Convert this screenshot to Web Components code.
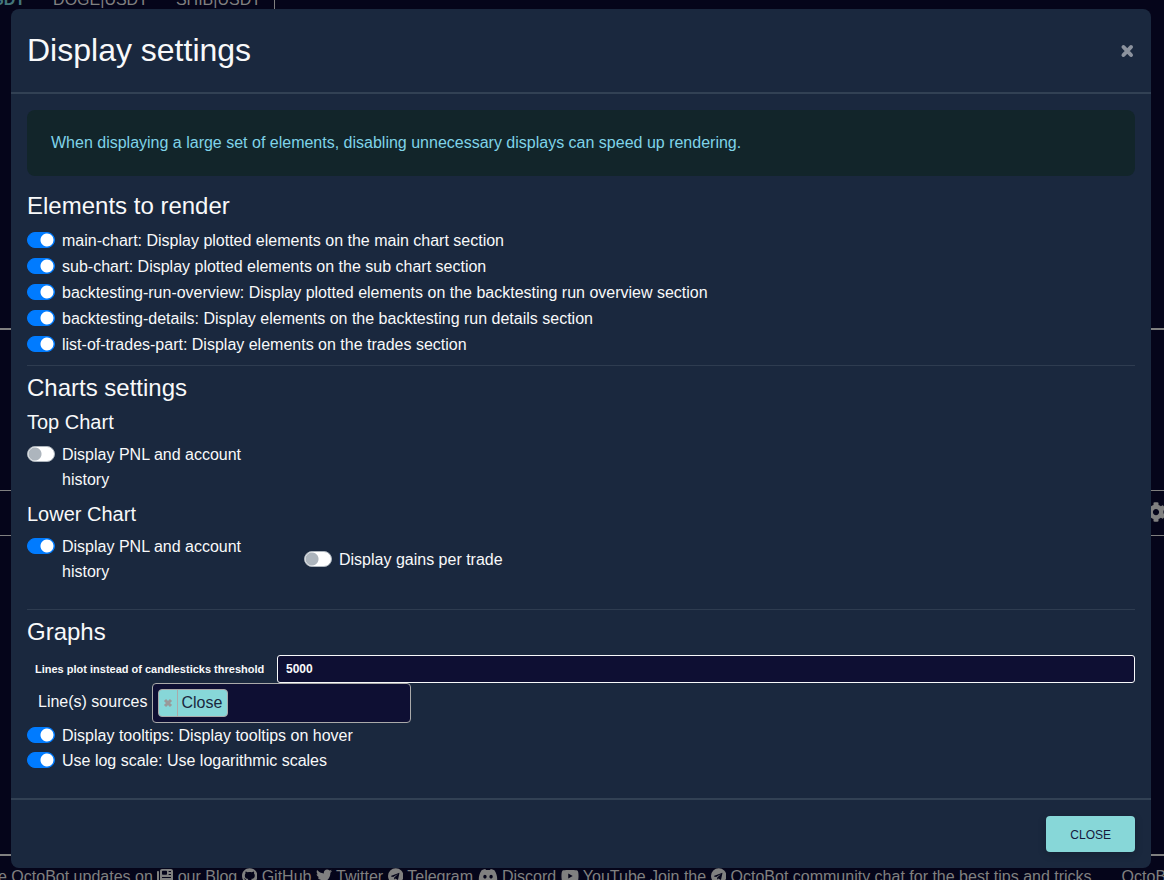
<!DOCTYPE html>
<html lang="en">
<head>
<meta charset="utf-8">
<title>Display settings</title>
<style>
  html, body { margin: 0; height: 100%; overflow: hidden; background: #05051a; }
  body { font-family: "Liberation Sans", Arial, sans-serif; font-size: 16px; line-height: 25px; color: #f8f9fa; }
</style>
</head>
<body>
<octo-screen>
  <octo-dashboard slot="page"></octo-dashboard>
  <settings-dialog slot="dialog" heading="Display settings">
    <info-alert>When displaying a large set of elements, disabling unnecessary displays can speed up rendering.</info-alert>
    <settings-section heading="Elements to render" spaced>
      <toggle-switch checked>main-chart: Display plotted elements on the main chart section</toggle-switch>
      <toggle-switch checked>sub-chart: Display plotted elements on the sub chart section</toggle-switch>
      <toggle-switch checked>backtesting-run-overview: Display plotted elements on the backtesting run overview section</toggle-switch>
      <toggle-switch checked>backtesting-details: Display elements on the backtesting run details section</toggle-switch>
      <toggle-switch checked>list-of-trades-part: Display elements on the trades section</toggle-switch>
    </settings-section>
    <settings-section heading="Charts settings" divided>
      <chart-group heading="Top Chart">
        <toggle-switch>Display PNL and account history</toggle-switch>
      </chart-group>
      <chart-group heading="Lower Chart">
        <toggle-switch checked>Display PNL and account history</toggle-switch>
        <toggle-switch>Display gains per trade</toggle-switch>
      </chart-group>
    </settings-section>
    <settings-section heading="Graphs" divided roomy>
      <number-field value="5000">Lines plot instead of candlesticks threshold</number-field>
      <tag-field tag="Close">Line(s) sources</tag-field>
      <toggle-switch checked>Display tooltips: Display tooltips on hover</toggle-switch>
      <toggle-switch checked>Use log scale: Use logarithmic scales</toggle-switch>
    </settings-section>
  </settings-dialog>
</octo-screen>

<script>
const define = (name, html, setup) => {
  const template = document.createElement('template');
  template.innerHTML = html;
  customElements.define(name, class extends HTMLElement {
    constructor() {
      super();
      this.attachShadow({ mode: 'open' }).append(template.content.cloneNode(true));
    }
    connectedCallback() { if (setup) setup(this, this.shadowRoot); }
  });
};

const setHeading = (host, root) => {
  root.querySelector('.heading').textContent = host.getAttribute('heading');
};

define('octo-screen', `
  <style>
    :host { display: grid; height: 100vh; overflow: hidden; grid-template: minmax(0, 1fr) / minmax(0, 1fr); }
    ::slotted(*) { grid-area: 1 / 1; }
  </style>
  <slot name="page"></slot><slot name="dialog"></slot>`);

const icons = {
  cog: ['0 0 512 512', 'M487.4 315.7l-42.6-24.6c4.3-23.2 4.3-47 0-70.2l42.6-24.6c4.9-2.8 7.1-8.6 5.5-14-11.1-35.6-30-67.8-54.7-94.6-3.8-4.1-10-5.1-14.8-2.3L380.8 110c-17.9-15.4-38.5-27.3-60.8-35.1V25.8c0-5.6-3.9-10.5-9.4-11.7-36.7-8.2-74.3-7.8-109.2 0-5.5 1.2-9.4 6.1-9.4 11.7V75c-22.2 7.9-42.8 19.8-60.8 35.1L88.7 85.5c-4.9-2.8-11-1.9-14.8 2.3-24.7 26.7-43.6 58.9-54.7 94.6-1.7 5.4.6 11.2 5.5 14L67.3 221c-4.3 23.2-4.3 47 0 70.2l-42.6 24.6c-4.9 2.8-7.1 8.6-5.5 14 11.1 35.6 30 67.8 54.7 94.6 3.8 4.1 10 5.1 14.8 2.3l42.6-24.6c17.9 15.4 38.5 27.3 60.8 35.1v49.2c0 5.6 3.9 10.5 9.4 11.7 36.7 8.2 74.3 7.8 109.2 0 5.5-1.2 9.4-6.1 9.4-11.7v-49.2c22.2-7.9 42.8-19.8 60.8-35.1l42.6 24.6c4.9 2.8 11 1.9 14.8-2.3 24.7-26.7 43.6-58.9 54.7-94.6 1.5-5.5-.7-11.3-5.6-14.1zM256 336c-44.1 0-80-35.9-80-80s35.9-80 80-80 80 35.9 80 80-35.9 80-80 80z'],
  news: ['0 0 512 512', 'M96 96c0-35 29-64 64-64h288c35 0 64 29 64 64v320c0 35-29 64-64 64H80c-44 0-80-36-80-80V128c0-18 14-32 32-32s32 14 32 32v272c0 9 7 16 16 16s16-7 16-16zM160 112v80c0 13 11 24 24 24h112c13 0 24-11 24-24v-80c0-13-11-24-24-24H184c-13 0-24 11-24 24zM372 96h76v32h-76zM372 192h76v32h-76zM160 288h288v32H160zM160 384h288v32H160z'],
  github: ['0 0 496 512', 'M244.8 8C106.1 8 0 113.3 0 252c0 110.9 69.8 205.8 169.5 239.2 12.8 2.3 17.3-5.6 17.3-12.1 0-6.2-.3-40.4-.3-61.4 0 0-70 15-84.7-29.8 0 0-11.4-29.1-27.800-36.600 0 0-22.900-15.700 1.600-15.400 0 0 24.900 2 38.600 25.800 21.900 38.600 58.600 27.500 72.900 20.900 2.300-16 8.800-27.100 16-33.700-55.900-6.200-112.300-14.300-112.300-110.500 0-27.500 7.600-41.300 23.600-58.900-2.600-6.500-11.100-33.300 2.600-67.900 20.900-6.500 69 27 69 27 20-5.600 41.500-8.500 62.800-8.500s42.800 2.900 62.800 8.500c0 0 48.100-33.600 69-27 13.700 34.700 5.200 61.400 2.600 67.900 16 17.700 25.800 31.500 25.800 58.900 0 96.500-58.900 104.200-114.800 110.500 9.200 7.900 17 22.900 17 46.400 0 33.700-.3 75.400-.3 83.600 0 6.500 4.600 14.400 17.300 12.100C428.200 457.800 496 362.900 496 252 496 113.300 383.500 8 244.800 8z'],
  twitter: ['0 0 512 512', 'M459.37 151.716c.325 4.548.325 9.097.325 13.645 0 138.720-105.583 298.558-298.558 298.558-59.452 0-114.680-17.219-161.137-47.106 8.447.974 16.568 1.299 25.340 1.299 49.055 0 94.213-16.568 130.274-44.832-46.132-.975-84.792-31.188-98.112-72.772 6.498.974 12.995 1.624 19.818 1.624 9.421 0 18.843-1.300 27.614-3.573-48.081-9.747-84.143-51.980-84.143-102.985v-1.299c13.969 7.797 30.214 12.670 47.431 13.319-28.264-18.843-46.781-51.005-46.781-87.391 0-19.492 5.197-37.360 14.294-52.954 51.655 63.675 129.300 105.258 216.365 109.807-1.624-7.797-2.599-15.918-2.599-24.040 0-57.828 46.782-104.934 104.934-104.934 30.213 0 57.502 12.670 76.670 33.137 23.715-4.548 46.456-13.320 66.599-25.340-7.798 24.366-24.366 44.833-46.132 57.827 21.117-2.273 41.584-8.122 60.426-16.243-14.292 20.791-32.161 39.308-52.628 54.253z'],
  telegram: ['0 0 496 512', 'M248 8a248 248 0 1 0 0 496a248 248 0 1 0 0-496zM363 177l-41 192c-3 13-11 17-22 10l-62-46-30 29c-4 4-7 6-13 6l4-63 115-104c5-4-1-7-8-3L164 288l-61-19c-13-4-13-13 3-20l240-92c11-4 20 3 17 20z'],
  discord: ['0 0 640 512', 'M525 70a486 486 0 0 0-120-37l-17 33a450 450 0 0 0-136 0l-17-33a486 486 0 0 0-120 37C39 184 18 295 28 405a490 490 0 0 0 149 75l31-51-49-23 12-10c96 45 202 45 298 0l12 10-49 23 31 51a490 490 0 0 0 149-75c12-127-21-237-87-335zM222 337c-29 0-53-27-53-60s23-60 53-60 54 27 53 60-23 60-53 60zm196 0c-29 0-53-27-53-60s23-60 53-60 54 27 53 60-23 60-53 60z'],
  youtube: ['0 0 576 512', 'M549.655 124.083c-6.281-23.650-24.787-42.276-48.284-48.597C458.781 64 288 64 288 64S117.220 64 74.629 75.486c-23.497 6.322-42.003 24.947-48.284 48.597C15 167 15 256.400 15 256.400s0 89.500 11.300 132.300c6.300 23.600 24.800 41.500 48.300 47.800C117.200 448 288 448 288 448s170.800 0 213.400-11.500c23.500-6.300 42-24.200 48.300-47.800C561 346 561 256.400 561 256.400s0-89.400-11.345-132.317zM232 338V175l143 81z'],
};

define('oct-icon', `
  <style>
    :host { display: inline-block; height: 16px; vertical-align: -2px; }
    svg { display: block; height: 100%; fill: currentColor; fill-rule: evenodd; }
  </style>
  <svg aria-hidden="true"><path></path></svg>`, (host, root) => {
  const [box, d] = icons[host.getAttribute('name')];
  root.querySelector('svg').setAttribute('viewBox', box);
  root.querySelector('path').setAttribute('d', d);
});

define('octo-dashboard', `
  <style>
    :host { display: grid; grid-template-rows: 328fr 162fr 45fr 319fr 26px; height: 100vh; color: #808080; line-height: 24px; overflow: hidden; }
    .row { box-sizing: border-box; min-height: 0; border-top: 1px solid #808080; }
    .thick { border-top-width: 2px; }
    .tabs { border: 0; }
    nav { display: flex; justify-content: flex-end; align-items: flex-end; gap: 28px; box-sizing: border-box;
      width: 275px; height: 12px; padding-right: 13px; overflow: hidden; border-right: 1px solid #808080; }
    .active { color: #43757a; font-weight: 700; }
    .tools { display: flex; justify-content: flex-end; align-items: center; padding-bottom: 3px; }
    .tools oct-icon { height: 20px; margin-right: -2px; }
    footer { display: flex; gap: 30px; padding-top: 9px; white-space: nowrap; overflow: hidden; }
    .news { margin-left: -2px; }
  </style>
  <div class="row tabs"><nav><span class="active">SDT</span><span>DOGE|USDT</span><span>SHIB|USDT</span></nav></div>
  <div class="row thick"></div>
  <div class="row tools"><oct-icon name="cog"></oct-icon></div>
  <div class="row"></div>
  <footer class="row thick">
    <span class="news">e OctoBot updates on <oct-icon name="news"></oct-icon> our Blog <oct-icon name="github"></oct-icon> GitHub <oct-icon name="twitter"></oct-icon> Twitter <oct-icon name="telegram"></oct-icon> Telegram <oct-icon name="discord"></oct-icon> Discord <oct-icon name="youtube"></oct-icon> YouTube Join the <oct-icon name="telegram"></oct-icon> OctoBot community chat for the best tips and tricks</span>
    <span>OctoB</span>
  </footer>`);

define('settings-dialog', `
  <style>
    :host { display: block; align-self: start; margin: 9px 13px 12px 11px; background: #1a283e; border-radius: 8px; z-index: 1; }
    header { display: flex; justify-content: space-between; align-items: center; padding: 22px 16px 23px; border-bottom: 2px solid #324154; }
    h2 { margin: 0; font-size: 32px; line-height: 38px; font-weight: 400; }
    .dismiss { display: flex; padding: 0; border: 0; background: none; color: #8c939e; }
    .dismiss svg { width: 16px; height: 16px; stroke: currentColor; stroke-width: 4; stroke-linecap: round; }
    main { padding: 16px 16px 25px; }
    footer { display: flex; justify-content: flex-end; padding: 16px; border-top: 2px solid #324154; }
    .close { height: 36px; padding: 2px 24px 0; border: 0; border-radius: 4px; background: #87d7d8; color: #15193d;
      font: 12px "Liberation Sans", Arial, sans-serif; box-shadow: 0 2px 8px #0003; }
  </style>
  <header>
    <h2 class="heading"></h2>
    <button class="dismiss" type="button" aria-label="Dismiss"><svg viewBox="0 0 16 16"><path d="M4.500 5l7.500 8M12 5l-7.500 8"/></svg></button>
  </header>
  <main><slot></slot></main>
  <footer><button class="close" type="button">CLOSE</button></footer>`, setHeading);

define('info-alert', `
  <style>
    :host { display: block; margin-bottom: 15px; padding: 20px 24px 21px; border-radius: 8px; background: #12252a; color: #7fd3e8; }
  </style><slot></slot>`);

define('settings-section', `
  <style>
    :host { display: block; }
    :host([divided]) { margin-top: 8px; border-top: 1px solid #2e3c50; padding-top: 7px; }
    :host([roomy]) { margin-top: 25px; }
    :host([spaced]) ::slotted(:not(:last-child)) { margin-bottom: 1px; }
    h4 { margin: 0 0 8px; font-size: 24px; line-height: 29px; font-weight: 400; }
    :host([roomy]) h4 { margin-bottom: 9px; }
  </style><h4 class="heading"></h4><slot></slot>`, setHeading);

define('chart-group', `
  <style>
    :host { display: block; }
    :host(:not(:last-child)) { margin-bottom: 10px; }
    h5 { margin: 0 0 8px; font-size: 20px; line-height: 24px; font-weight: 400; }
    .options { display: grid; grid-template-columns: repeat(4, 1fr); align-items: center; }
    ::slotted(*) { padding-right: 30px; }
  </style><h5 class="heading"></h5><div class="options"><slot></slot></div>`, setHeading);

define('toggle-switch', `
  <style>
    :host { display: block; }
    label { display: flex; gap: 7px; }
    input { appearance: none; flex: none; box-sizing: border-box; width: 28px; height: 16px; margin: 4px 0 0; border: 1px solid #adb5bd;
      border-radius: 8px; background: #fff radial-gradient(circle at 7px 7px, #adb5bd 6px, #adb5bd00 7px); }
    input:checked { border-color: #007bff; background: #007bff radial-gradient(circle at 19px 7px, #fff 6px, #fff0 7px); }
  </style>
  <label><input type="checkbox"><span><slot></slot></span></label>`, (host, root) => {
  root.querySelector('input').checked = host.hasAttribute('checked');
});

define('number-field', `
  <style>
    :host { display: flex; align-items: center; gap: 7px; padding-left: 8px; font-weight: 700; }
    label { min-width: 235px; font-size: 11px; }
    input { flex: 1; min-width: 0; box-sizing: border-box; height: 28px; padding: 0 8px; border: 1px solid #f8f9fa; border-radius: 3px;
      background: #0e0f33; color: #f8f9fa; font: inherit; font-size: 12px; }
  </style>
  <label for="value"><slot></slot></label><input id="value" type="text" inputmode="numeric">`, (host, root) => {
  root.querySelector('input').value = host.getAttribute('value');
});

define('tag-field', `
  <style>
    :host { display: flex; align-items: center; gap: 5px; padding-left: 11px; }
    label { margin-bottom: 3px; }
    .box { display: flex; align-items: center; box-sizing: border-box; width: 259px; height: 40px; padding: 0 5px; border: 1px solid #aaa;
      border-radius: 4px; background: #0e0f33; }
    .tag { display: flex; box-sizing: border-box; height: 28px; border: 1px solid #aaa; border-radius: 4px; background: #87d7d8; color: #1a283e; overflow: hidden; }
    .tag span { padding: 0 5px 0 3px; line-height: 26px; }
    button { display: flex; align-items: center; justify-content: center; width: 19px; padding: 0; border: 0; border-right: 1px solid #aaa; background: none; color: #999; }
    svg { width: 10px; height: 10px; stroke: currentColor; stroke-width: 3; }
    input { flex: 1; min-width: 0; padding: 0 5px; border: 0; outline: 0; background: none; color: #f8f9fa; font: inherit; }
  </style>
  <label for="search"><slot></slot></label>
  <div class="box">
    <div class="tag"><button type="button" aria-label="Remove"><svg viewBox="0 0 10 10"><path d="M2 2l6 6M8 2l-6 6"/></svg></button><span></span></div>
    <input id="search" type="text">
  </div>`, (host, root) => {
  root.querySelector('.tag span').textContent = host.getAttribute('tag');
});
</script>
</body>
</html>
